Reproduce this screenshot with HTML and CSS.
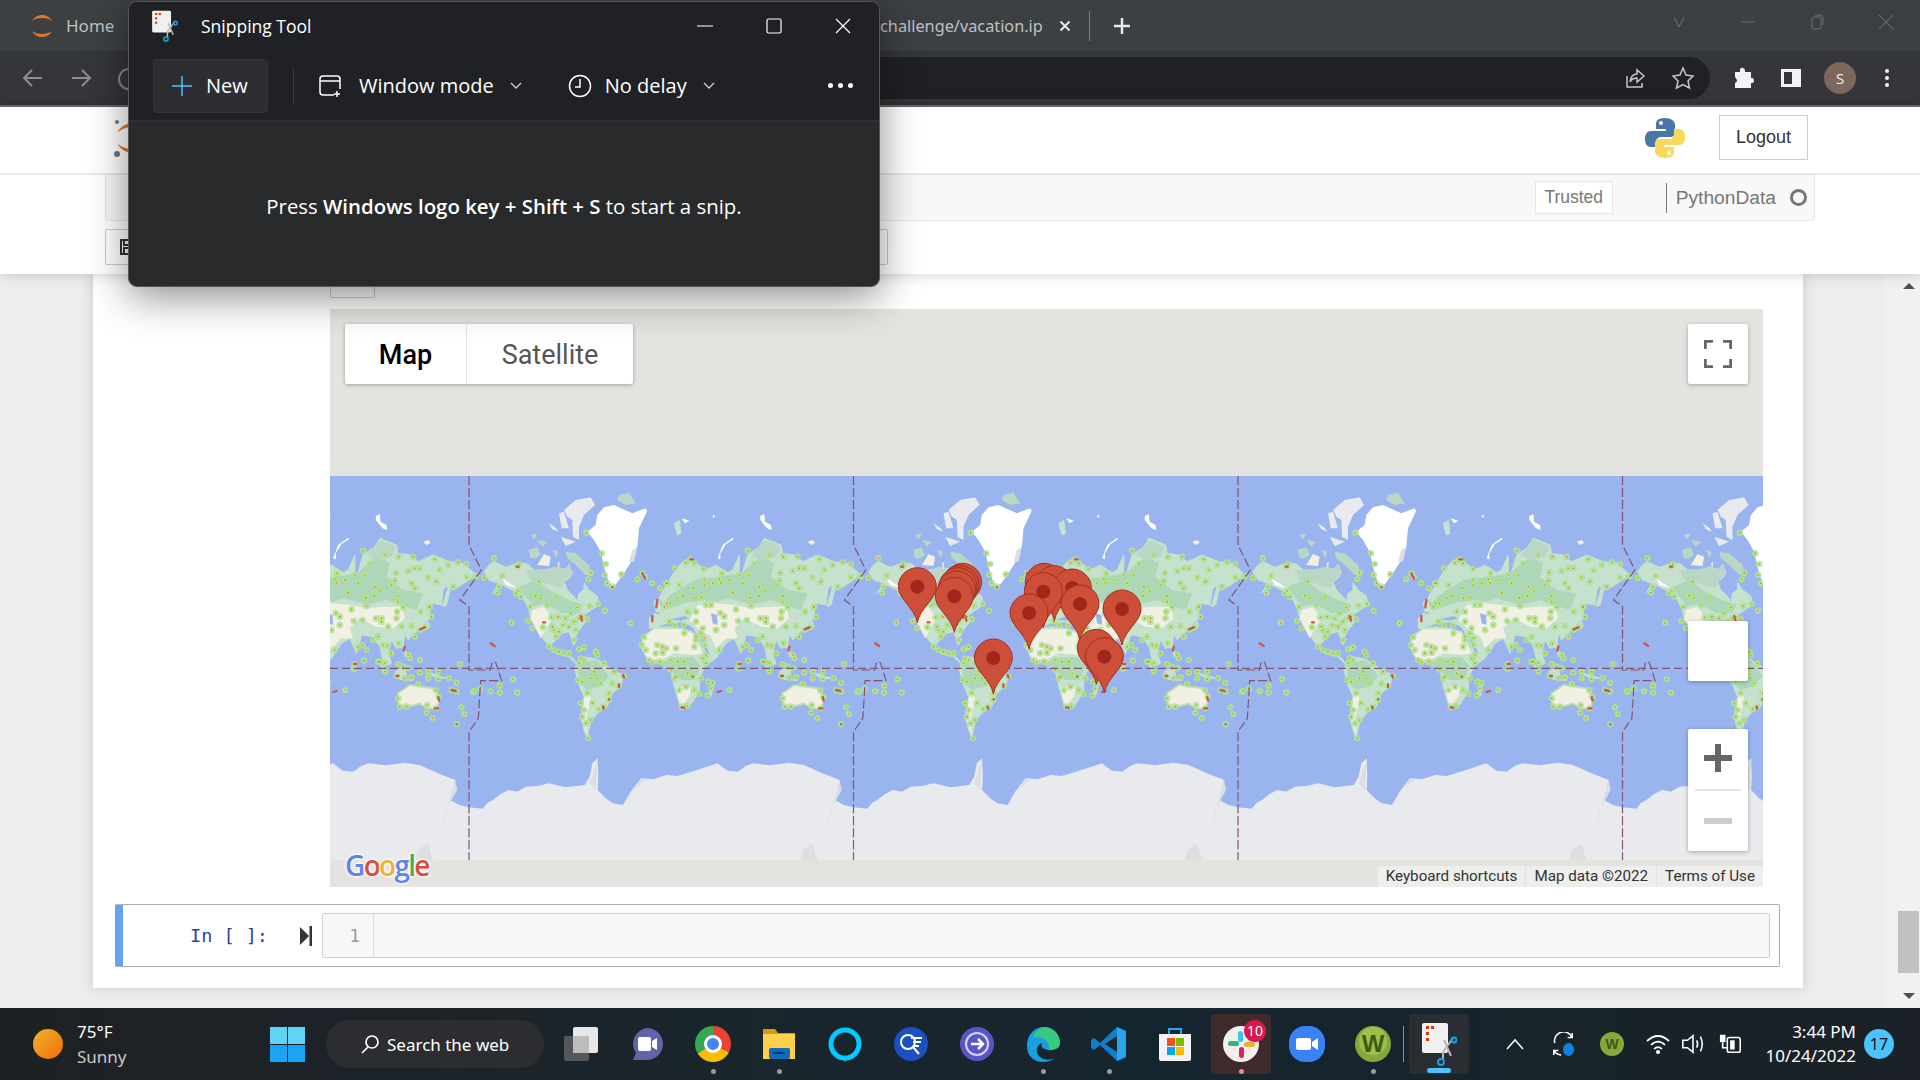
FILE: index.html
```html
<!DOCTYPE html>
<html lang="en">
<head>
  <meta charset="UTF-8">
  <title>challenge/vacation.ipynb</title>
  <link rel="stylesheet" href="styles.css">
</head>
<body>
  <!-- browser -->
  <div class="tabstrip">
    <div class="tab-home">
      <svg class="jup-small" viewBox="0 0 24 30"><path d="M2 10C6 2 18 2 22 10C18 6 6 6 2 10Z"/><path d="M2 20C6 28 18 28 22 20C18 24 6 24 2 20Z"/></svg>
      <span>Home</span>
    </div>
    <div class="tab-active">
      <span class="tab-title">challenge/vacation.ip</span>
      <svg class="tab-x" viewBox="0 0 12 12"><path d="M1.500 1.500L10.500 10.500M10.500 1.500L1.500 10.500"/></svg>
    </div>
    <div class="tab-sep"></div>
    <svg class="tab-plus" viewBox="0 0 18 18"><path d="M9 1V17M1 9H17"/></svg>
    <div class="win-ctrls">
      <svg viewBox="0 0 16 16"><path d="M3 3L8 13L13 3"/></svg>
      <svg viewBox="0 0 16 16"><path d="M1 8H15"/></svg>
      <svg viewBox="0 0 16 16"><rect x="3" y="3" width="9" height="12" rx="2"/><path d="M6 1H11Q14 1 14 4V11"/></svg>
      <svg viewBox="0 0 16 16"><path d="M1 1L15 15M15 1L1 15"/></svg>
    </div>
  </div>
  <div class="addrbar">
    <svg class="nav-ic" viewBox="0 0 24 24"><path d="M21 12H4M11 4L3 12L11 20"/></svg>
    <svg class="nav-ic" viewBox="0 0 24 24"><path d="M3 12H20M13 4L21 12L13 20"/></svg>
    <svg class="nav-ic" viewBox="0 0 24 24"><path d="M20 7A10 10 0 1 0 22 12"/></svg>
    <div class="omnibox">
      <svg class="omni-ic" viewBox="0 0 24 24"><path d="M4 10V21H19V17"/><path d="M7 16Q8 8 14 8V4L21 10L14 16V12Q9 12 7 16Z"/></svg>
      <svg class="omni-ic" viewBox="0 0 24 24"><path d="M12 2L15 9L22 10L17 15L18.500 22L12 18.500L5.500 22L7 15L2 10L9 9Z"/></svg>
    </div>
    <svg class="tool-ic" viewBox="0 0 24 24"><path d="M9 3Q12 0 14 4V6H20V12H22Q24 15 22 17H20V22H4V17Q8 15 4 11V6H9Z"/></svg>
    <svg class="tool-ic" viewBox="0 0 24 24"><path fill-rule="evenodd" d="M2 3H22V21H2ZM5 6V18H13V6Z"/></svg>
    <div class="avatar">S</div>
    <div class="kebab"><i></i><i></i><i></i></div>
  </div>

  <!-- jupyter header -->
  <div class="jp-head">
    <div class="jp-top">
      <svg class="jup-logo" viewBox="0 0 40 42"><path d="M4 16C10 3 30 3 36 16C28 8 12 8 4 16Z"/><path d="M4 26C10 39 30 39 36 26C28 34 12 34 4 26Z"/><circle class="jup-dot" cx="4" cy="5" r="2"/><circle class="jup-dot" cx="4" cy="37" r="3"/></svg>
      <svg class="py-logo" viewBox="0 0 42 42">
        <path class="py-blue" d="M21 1C12 1 12 5 12 8V12H22V14H7C2 14 1 19 1 22C1 27 3 30 7 30H12V25C12 21 15 20 18 20H27C29 20 31 18 31 16V8C31 4 27 1 21 1Z"/>
        <path class="py-yellow" d="M21 41C30 41 30 37 30 34V30H20V28H35C40 28 41 23 41 20C41 15 39 12 35 12H30V17C30 21 27 22 24 22H15C13 22 11 24 11 26V34C11 38 15 41 21 41Z"/>
        <circle class="py-eye" cx="17" cy="6" r="2"/><circle class="py-eye" cx="25" cy="36" r="2"/>
      </svg>
      <div class="logout">Logout</div>
    </div>
    <div class="jp-menu">
      <div class="trusted">Trusted</div>
      <div class="kernel">PythonData</div>
      <div class="kernel-dot"></div>
    </div>
    <div class="jp-btns">
      <svg class="save-ic" viewBox="0 0 16 16"><path d="M1 1H13L15 3V15H1ZM4 1V6H11V1M4 15V9H12V15"/></svg>
    </div>
  </div>

  <!-- notebook -->
  <div class="main">
    <div class="panel">
      <div class="out-stub"></div>
      <div class="map">
        <!-- units are 1/3 px, one world is 1153.5 wide -->
        <svg class="map-svg" viewBox="0 0 4299 1152">
          <defs>
            <path id="heat" d="M75 205h0M100 258h0M45 263h0M22 258h0M145 230h0M150 222h0M210 275h0M90 290h0M85 308h0M140 310h0M155 320h0M148 303h0M200 317h0M215 325h0M262 322h0M183 350h0M325 352h0M362 348h0M388 342h0M407 362h0M177 393h0M190 415h0M247 382h0M268 380h0M290 385h0M305 370h0M330 385h0M340 380h0M315 395h0M300 410h0M320 420h0M270 425h0M262 440h0M255 420h0M282 405h0M355 388h0M128 398h0M222 412h0M235 345h0M250 410h0M240 470h0M255 480h0M270 485h0M285 490h0M300 490h0M315 450h0M330 478h0M345 472h0M380 485h0M385 495h0M335 505h0M345 510h0M405 520h0M330 520h0M327 570h0M340 575h0M365 565h0M375 545h0M385 565h0M395 580h0M435 545h0M465 558h0M430 580h0M450 588h0M420 610h0M420 630h0M405 650h0M390 658h0M355 610h0M370 640h0M345 660h0M340 680h0M350 700h0M358 745h0M365 690h0M335 640h0M365 248h0M358 268h0M407 255h0M415 280h0M430 290h0M457 253h0M410 222h0M398 190h0M352 128h0M132 568h0M92 587h0M92 608h0M65 604h0M33 596h0M15 604h0M145 608h0M505 268h0M520 250h0M528 260h0M550 280h0M573 295h0M595 280h0M485 400h0M525 442h0M518 465h0M530 480h0M540 510h0M550 517h0M572 515h0M565 465h0M580 470h0M560 490h0M664 208h0M651 218h0M676 220h0M704 237h0M618 235h0M591 280h0M631 285h0M673 295h0M706 270h0M706 285h0M731 280h0M751 268h0M756 278h0M781 270h0M758 250h0M811 255h0M841 255h0M836 182h0M901 195h0M943 200h0M986 200h0M1051 208h0M1091 225h0M1121 217h0M1146 222h0M1171 262h0M1146 262h0M1106 290h0M1056 275h0M1031 262h0M1066 240h0M1006 235h0M991 235h0M971 243h0M934 248h0M856 222h0M821 280h0M871 290h0M888 303h0M869 317h0M844 323h0M791 308h0M931 272h0M921 285h0M981 280h0M991 295h0M941 318h0M941 335h0M956 352h0M846 348h0M801 358h0M754 370h0M766 380h0M766 405h0M808 393h0M834 390h0M874 385h0M891 395h0M911 410h0M938 365h0M676 325h0M698 322h0M626 325h0M641 317h0M594 340h0M586 350h0M604 340h0M656 365h0M681 365h0M601 395h0M618 405h0M644 405h0M681 395h0M701 415h0M726 345h0M711 345h0M696 430h0M706 445h0M741 420h0M681 450h0M681 440h0M646 430h0M676 470h0M706 465h0M751 480h0M711 495h0M621 475h0M591 475h0M581 488h0M606 510h0M626 515h0M646 515h0M701 505h0M711 520h0M606 540h0M621 560h0M671 560h0M696 565h0M656 550h0M651 590h0M676 600h0M691 612h0M716 617h0M726 595h0M718 575h0M731 578h0M616 565h0M631 600h0M638 650h0M654 648h0M781 600h0M821 470h0M834 465h0M846 480h0M866 450h0M881 440h0M896 465h0M908 468h0M921 490h0M943 460h0M981 408h0M991 440h0M1006 420h0M1024 412h0M1041 380h0M1034 352h0M1008 365h0M1036 350h0M951 410h0M936 385h0M891 385h0M971 495h0M976 505h0M1006 510h0M886 515h0M901 520h0M901 545h0M881 515h0M809 522h0M808 538h0M838 512h0M936 558h0M941 522h0M956 530h0M971 535h0M961 565h0M981 562h0M1006 548h0M1031 545h0M1061 545h0M1061 568h0M1031 565h0M1094 565h0M1116 578h0M1126 522h0M1166 605h0M1101 600h0M1116 605h0M1001 582h0M1054 600h0M1063 620h0M941 625h0M946 650h0M966 650h0M1028 645h0M1026 668h0M1056 655h0M1044 685h0M1131 652h0M1139 672h0M1116 703h0"/>
            <g id="world" transform="translate(0 42)">
              <g class="tile">
                <path class="ice" d="M0 952L41 956L56 938L72 930L95 912L118 900L145 905L171 890L205 888L240 880L290 892L347 885L362 860L370 820L386 805L388 860L386 900L410 925L431 940L462 945L485 905L516 865L552 868L592 855L625 858L653 850L700 835L745 820L775 842L806 845L830 828L852 820L905 826L960 818L1005 825L1060 850L1112 870L1104 905L1097 930L1125 945L1153 952V1110H0Z"/>
                <path class="ice-dark" d="M1112 870L1118 900L1085 960L1070 1040L1090 950ZM386 805L380 900L362 880ZM516 865L495 900L530 870ZM1000 1080L1030 1060L1045 1110H995Z"/>
                <!-- the Americas -->
                <path class="land" d="M45 245L60 225L75 215L110 232L150 218L175 222L195 240L230 240L260 232L290 238L300 222L310 250L300 265L285 275L295 300L320 325L325 340L330 310L345 300L345 278L360 300L385 318L390 345L370 358L345 375L350 395L330 420L320 440L310 450L300 425L280 430L250 460L245 470L265 490L305 500L312 505L325 525L300 500L260 490L225 450L200 415L185 385L180 360L165 330L130 300L100 285L70 310L90 280L60 270Z"/>
                <path class="land-grey" d="M170 240L230 240L260 232L290 238L300 222L310 250L285 275L280 295L230 280L185 270Z"/>
                <path class="land-dark" d="M150 290L200 270L240 300L300 330L340 345L330 370L280 370L230 340L195 350L170 320Z"/>
                <path class="snow" d="M100 265L130 285L145 295L110 285Z"/>
                <path class="sand" d="M190 360L225 350L250 385L235 410L215 445L200 415L185 385Z"/>
                <path class="land-grey" d="M290 185L320 190L360 225L372 260L350 255L320 225L295 205ZM178 180L205 172L215 195L200 205L185 205ZM205 150L235 155L220 170ZM185 135L205 130L195 148ZM250 180L268 185L262 205Z"/>
                <path class="sand" d="M205 225L225 192L245 200L240 228Z"/>
                <path class="ice" d="M265 220L272 215L270 240ZM275 140L320 155L290 168ZM285 60L320 30L365 22L378 45L345 75L330 110L330 150L312 140L310 90L295 80ZM270 70L285 65L300 115L278 115ZM240 100L262 115L268 125L250 118Z"/>
                <path class="snow" d="M355 125L380 105L385 75L405 52L435 45L490 70L530 55L535 62L510 115L505 170L490 210L465 250L435 290L420 280L405 230L395 185L375 150Z"/>
                <path class="ice-dark" d="M490 180L505 170L495 215L480 215Z"/>
                <path class="land-grey" d="M450 15L480 8L500 40L470 45L445 30Z"/>
                <path class="land" d="M325 515L345 500L385 508L410 525L440 545L465 555L455 590L430 610L415 650L385 670L365 695L355 745L345 720L335 680L345 620L330 585L318 540Z"/>
                <path class="land-dark" d="M325 520L385 510L420 560L390 590L355 600L330 575Z"/>
                <path class="sand" d="M345 625L360 605L365 630L350 690L355 740L340 690Z"/>
                <path class="land" d="M310 460L325 445L315 465ZM330 478L345 472L340 482Z"/>
                <!-- old world -->
                <g transform="translate(576 0)">
                  <path class="land" d="M-55 440L-20 415L20 410L60 415L95 425L110 450L135 500L185 460L165 505L130 530L115 570L115 605L85 650L60 660L50 625L40 590L30 545L-5 520L-40 510L-58 475Z"/>
                  <path class="sand" d="M-55 445L-20 418L60 418L95 430L125 490L100 495L40 490L0 510L-40 505L-58 475Z"/>
                  <path class="land-dark" d="M-5 520L30 505L95 500L120 530L100 570L60 570L35 545Z"/>
                  <path class="sand" d="M45 590L90 590L85 620L60 650L52 625Z"/>
                  <path class="land" d="M-35 385L-20 370L-5 375L5 340L-5 320L20 280L40 245L65 215L85 205L115 225L130 240L145 235L165 225L200 248L215 240L235 195L235 250L240 260L260 195L295 170L310 145L360 165L365 190L400 195L425 215L470 195L520 215L560 220L600 255L570 275L530 300L510 290L520 270L500 300L495 345L470 340L460 360L460 385L430 415L405 440L395 450L385 430L380 470L360 475L345 450L335 490L345 520L325 530L310 470L290 440L255 435L240 490L220 445L195 460L165 505L135 515L115 445L95 410L60 395L20 405L-5 415L-35 415Z"/>
                  <path class="land-dark" d="M20 320L100 270L180 260L240 250L300 200L340 220L330 260L380 300L440 310L420 360L390 350L330 330L270 345L200 325L170 335L130 330L70 340L10 360Z"/>
                  <path class="land-grey" d="M270 195L310 150L358 168L345 200L300 210Z"/>
                  <path class="sand" d="M110 345L160 340L220 345L270 355L320 350L375 350L385 385L350 415L300 410L250 385L220 415L230 445L195 445L165 475L150 440L110 415L85 390Z"/>
                  <path class="sea" d="M150 370L168 375L170 405L155 400ZM30 388L70 378L85 385L60 392ZM118 445L122 442L145 490L138 495ZM-10 412L20 400L60 398L90 408L60 408L20 408Z"/>
                  <path class="land" d="M40 100L55 92L60 130L50 135L45 120ZM515 290L525 285L510 345L498 350ZM425 415L445 405L455 395L460 410L435 425ZM305 510L330 545L320 545ZM355 545L385 530L390 555L365 565ZM355 560L410 572L370 568ZM450 545L510 565L480 565ZM233 520L240 535L232 535ZM155 580L160 575L150 620L140 620ZM-20 335L-5 325L0 365L-15 365ZM380 470L395 500L385 500Z"/>
                  <path class="snow" d="M62 85L85 92L72 100ZM170 205L185 165L215 143L218 148L195 162L178 190L178 208ZM298 78L310 72L312 95L330 105L332 120L318 115L298 90ZM155 75L163 77L157 85Z"/>
                  <path class="sand" d="M440 155L455 150L463 158L450 165Z"/>
                  <path class="australia" d="M365 610L400 585L430 590L470 595L490 625L480 655L450 655L430 640L395 650L370 650L362 625Z"/>
                </g>
                <g class="heat-on">
                  <use class="heat-glow" href="#heat"/>
                  <use class="heat-lime" href="#heat"/>
                  <use class="heat-core" href="#heat"/>
                </g>
                <path class="spots" d="M335 378l4 14M65 460l12 8M550 378v16M565 330l-3 22M520 250l8 16M430 292h1M222 397h6M462 555l3 8M450 583v8M402 650l2 6M420 628h1M143 230h6M664 208h8M961 470l-3 12M756 603l-10 3M671 560h1M638 653h8M1101 600l12 3M1061 622l3 10M1051 655h10M1116 703h1M1021 412l-14 6M936 558h6M809 522h6"/>
              </g>
              <path class="dateline" d="M0 -42V165L37 240L-27 330L0 350V540H64L69 517H80L98 572H35L28 685L0 725V1110"/>
            </g>
            <g id="pin">
              <path class="pin-body" d="M0 0C-8 -45 -57 -70 -57 -108C-57 -140 -30 -165 0 -165C30 -165 57 -140 57 -108C57 -70 8 -45 0 0Z"/>
              <circle class="pin-dot" cy="-108" r="21"/>
            </g>
          </defs>
          <rect class="sea" width="4299" height="1152"/>
          <use href="#world" x="-736.500"/>
          <use href="#world" x="417"/>
          <use href="#world" x="1570.500"/>
          <use href="#world" x="2724"/>
          <use href="#world" x="3877.500"/>
          <path class="equator" d="M0 577H4299"/>
          <use href="#pin" x="1762" y="440"/>
          <use href="#pin" x="1898" y="427"/>
          <use href="#pin" x="1890" y="434"/>
          <use href="#pin" x="1884" y="440"/>
          <use href="#pin" x="1880" y="450"/>
          <use href="#pin" x="1873" y="469"/>
          <use href="#pin" x="1990" y="654"/>
          <use href="#pin" x="2143" y="427"/>
          <use href="#pin" x="2173" y="434"/>
          <use href="#pin" x="2227" y="444"/>
          <use href="#pin" x="2140" y="455"/>
          <use href="#pin" x="2250" y="492"/>
          <use href="#pin" x="2097" y="519"/>
          <use href="#pin" x="2376" y="507"/>
          <use href="#pin" x="2299" y="625"/>
          <use href="#pin" x="2323" y="650"/>
        </svg>
        <div class="map-type">
          <div class="map-type-on">Map</div>
          <div class="map-type-off">Satellite</div>
        </div>
        <div class="map-full">
          <svg viewBox="0 0 28 28"><path d="M1 9V1H9M19 1H27V9M27 19V27H19M9 27H1V19"/></svg>
        </div>
        <div class="map-blank"></div>
        <div class="map-zoom">
          <div class="zoom-in"><i></i><i></i></div>
          <div class="zoom-line"></div>
          <div class="zoom-out"><i></i></div>
        </div>
        <div class="google"><span class="g-b">G</span><span class="g-r">o</span><span class="g-y">o</span><span class="g-b">g</span><span class="g-g">l</span><span class="g-r">e</span></div>
        <div class="attrib">
          <span>Keyboard shortcuts</span>
          <span>Map data ©2022</span>
          <span>Terms of Use</span>
        </div>
      </div>
      <div class="cell">
        <div class="prompt">In [ ]:</div>
        <svg class="run-ic" viewBox="0 0 12 20"><path d="M0 1L9 10L0 19Z"/><rect x="9.500" y="0" width="2.500" height="20"/></svg>
        <div class="code">
          <div class="gutter">1</div>
        </div>
      </div>
    </div>
    <div class="scrollbar">
      <div class="arrow-up"></div>
      <div class="thumb"></div>
      <div class="arrow-down"></div>
    </div>
  </div>

  <!-- taskbar -->
  <div class="taskbar">
    <div class="weather">
      <div class="sun"></div>
      <div class="weather-txt"><div>75°F</div><div class="sunny">Sunny</div></div>
    </div>
    <svg class="start" viewBox="0 0 35 35">
      <rect class="st1" width="17" height="17"/><rect class="st1" x="18" width="17" height="17"/>
      <rect class="st2" y="18" width="17" height="17"/><rect class="st2" x="18" y="18" width="17" height="17"/>
    </svg>
    <div class="search">
      <svg viewBox="0 0 20 20"><circle cx="12" cy="8" r="6"/><path d="M8 13L2 19"/></svg>
      <span>Search the web</span>
    </div>
    <div class="apps">
      <div class="app"><svg viewBox="0 0 36 36"><rect x="10" y="1" width="25" height="26" rx="2" fill="#e8e8e8"/><rect x="1" y="10" width="25" height="25" rx="2" fill="#5c5c5c" opacity=".9"/><rect x="10" y="10" width="16" height="17" fill="#bdbdbd"/></svg></div>
      <div class="app"><svg viewBox="0 0 36 36"><path d="M18 2A16 16 0 0 1 18 34H4L7 27A16 16 0 0 1 18 2Z" fill="#6264a7"/><rect x="9" y="11" width="13" height="14" rx="2" fill="#fff"/><path d="M23 15L28 12V24L23 21Z" fill="#fff"/></svg></div>
      <div class="app running"><div class="chrome-ic"><div></div></div></div>
      <div class="app running"><svg viewBox="0 0 36 36"><path d="M2 3H14L17 7H34V33H2Z" fill="#d69b14"/><rect x="2" y="8" width="32" height="25" fill="#fcd14e"/><rect x="8" y="22" width="21" height="11" rx="2" fill="#0f6cbd"/><rect x="12" y="26" width="12" height="2" fill="#083c6e"/></svg></div>
      <div class="app"><svg viewBox="0 0 36 36"><circle cx="18" cy="18" r="14" fill="none" stroke="#00caff" stroke-width="5"/><path d="M14 30L18 36L23 30Z" fill="#00caff"/></svg></div>
      <div class="app"><svg viewBox="0 0 36 36"><circle cx="18" cy="18" r="17" fill="#1c4fc4"/><circle cx="15" cy="16" r="7" fill="none" stroke="#fff" stroke-width="2"/><path d="M20 21L26 28M18 12H29M20 16H28M20 20H26" stroke="#fff" stroke-width="2"/></svg></div>
      <div class="app"><svg viewBox="0 0 36 36"><circle cx="18" cy="18" r="17" fill="#5b54c9"/><circle cx="18" cy="18" r="11" fill="none" stroke="#d9d6f7" stroke-width="2"/><path d="M12 18H24M19 13L24 18L19 23" fill="none" stroke="#fff" stroke-width="2.500"/></svg></div>
      <div class="app running"><svg viewBox="0 0 36 36"><path d="M2 20C2 8 10 1 19 1C29 1 35 9 35 17C35 22 30 24 25 24C20 24 15 22 17 17C11 19 10 27 15 31C20 35 26 34 30 32C26 35 21 36 18 36C9 36 2 30 2 20Z" fill="#1b9de2"/><path d="M19 1C29 1 35 9 35 17C35 22 30 24 25 24C24 14 17 9 8 12C10 5 15 1 19 1Z" fill="#37c881"/></svg></div>
      <div class="app running"><svg viewBox="0 0 36 36"><path d="M26 1L35 5V31L26 35L9 19L3 24L0 22V14L3 12L9 17Z" fill="#0f7fd0"/><path d="M26 10L14 18L26 26Z" fill="#1f2328"/><path d="M26 1L35 5V31L26 35Z" fill="#2aa3ee"/></svg></div>
      <div class="app"><svg viewBox="0 0 36 36"><path d="M12 9V3H24V9" fill="none" stroke="#28a8ea" stroke-width="2"/><path d="M2 8H34V33Q34 35 32 35H4Q2 35 2 33Z" fill="#f3f3f3"/><rect x="10" y="12" width="8" height="8" fill="#f25022"/><rect x="19" y="12" width="8" height="8" fill="#7fba00"/><rect x="10" y="21" width="8" height="8" fill="#00a4ef"/><rect x="19" y="21" width="8" height="8" fill="#ffb900"/></svg></div>
      <div class="app active-slack running-pink">
        <svg viewBox="0 0 36 36"><circle cx="18" cy="18" r="18" fill="#f2f0ec"/><rect x="15" y="5" width="5" height="11" rx="2.500" fill="#36c5f0"/><rect x="5" y="15" width="11" height="5" rx="2.500" fill="#2eb67d"/><rect x="16" y="21" width="5" height="11" rx="2.500" fill="#e01e5a"/><rect x="21" y="16" width="11" height="5" rx="2.500" fill="#ecb22e"/></svg>
        <div class="slack-badge">10</div>
      </div>
      <div class="app"><svg viewBox="0 0 36 36"><rect width="36" height="36" rx="16" fill="#3b82f6"/><rect x="7" y="12" width="15" height="12" rx="2" fill="#fff"/><path d="M23 16L29 12V24L23 20Z" fill="#fff"/></svg></div>
      <div class="app running"><svg viewBox="0 0 36 36"><circle cx="18" cy="18" r="18" fill="#84a93a"/><circle cx="18" cy="15" r="14" fill="#9cc04b"/><text class="w-letter" x="18" y="26">W</text></svg></div>
      <div class="app active-snip"><svg viewBox="0 0 36 44"><rect x="1" y="1" width="26" height="30" rx="2" fill="#f0f0f0"/><rect x="5" y="4" width="3" height="3" fill="#d83b01"/><rect x="10" y="4" width="3" height="3" fill="#d83b01"/><rect x="5" y="10" width="3" height="3" fill="#d83b01"/><rect x="5" y="16" width="3" height="3" fill="#d83b01"/><path d="M32 16L22 30V38M23 18L30 34" fill="none" stroke="#b8b8b8" stroke-width="2"/><circle cx="33" cy="18" r="2.500" fill="none" stroke="#1a9fe0" stroke-width="2"/><circle cx="20" cy="40" r="3" fill="none" stroke="#1a9fe0" stroke-width="2"/></svg></div>
    </div>
    <div class="tray">
      <svg class="tray-chev" viewBox="0 0 18 12"><path d="M1 11L9 2L17 11"/></svg>
      <svg class="tray-ic tray-sync" viewBox="0 0 24 26"><path d="M22 6A10 10 0 0 0 3 12M2 20A10 10 0 0 0 10 25M22 1V6H17M2 25V20H7"/><ellipse class="tray-blue" cx="18" cy="19" rx="6" ry="7"/></svg>
      <svg class="tray-ic tray-w" viewBox="0 0 24 24"><circle cx="12" cy="12" r="12" fill="#86a83a"/><text class="w-letter w-small" x="12" y="17">W</text></svg>
      <svg class="tray-ic tray-wifi" viewBox="0 0 24 22"><path d="M1 8Q12 -2 23 8M5 12Q12 5 19 12M8 16Q12 12 16 16"/><circle class="tray-fill" cx="12" cy="19" r="2"/></svg>
      <svg class="tray-ic tray-vol" viewBox="0 0 26 26"><path d="M2 9H7L13 4V22L7 17H2ZM17 9Q19 13 17 17M21 5Q25 13 21 21"/></svg>
      <svg class="tray-ic tray-bat" viewBox="0 0 26 26"><path class="tray-fill" d="M1 3H7V11H1Z"/><path d="M4 11V17H9"/><rect x="9" y="6" width="14" height="16" rx="2"/><rect class="tray-fill" x="12" y="9" width="5" height="10"/></svg>
    </div>
    <div class="clock"><div>3:44 PM</div><div>10/24/2022</div></div>
    <div class="notif">17</div>
  </div>

  <!-- snipping tool window -->
  <div class="snip">
    <div class="snip-title">
      <svg class="snip-app" viewBox="0 0 36 44"><rect x="1" y="1" width="26" height="30" rx="2" fill="#f0f0f0"/><rect x="5" y="4" width="3" height="3" fill="#d83b01"/><rect x="10" y="4" width="3" height="3" fill="#d83b01"/><rect x="5" y="10" width="3" height="3" fill="#d83b01"/><rect x="5" y="16" width="3" height="3" fill="#d83b01"/><path d="M32 16L22 30V38M23 18L30 34" fill="none" stroke="#b8b8b8" stroke-width="2"/><circle cx="33" cy="18" r="2.500" fill="none" stroke="#1a9fe0" stroke-width="2"/><circle cx="20" cy="40" r="3" fill="none" stroke="#1a9fe0" stroke-width="2"/></svg>
      <span>Snipping Tool</span>
      <div class="snip-ctrls">
        <svg viewBox="0 0 16 16"><path d="M0 8H16"/></svg>
        <svg viewBox="0 0 16 16"><rect x="1" y="1" width="14" height="14" rx="1.500"/></svg>
        <svg viewBox="0 0 16 16"><path d="M1 1L15 15M15 1L1 15"/></svg>
      </div>
    </div>
    <div class="snip-bar">
      <div class="snip-new">
        <svg viewBox="0 0 20 20"><path d="M10 0V20M0 10H20"/></svg>
        <span>New</span>
      </div>
      <div class="snip-sep"></div>
      <svg class="snip-ic" viewBox="0 0 24 24"><path d="M16 21H5Q2 21 2 18V5Q2 2 5 2H19Q22 2 22 5V15M2 7H22M19 17V23M16 20H22"/></svg>
      <span class="snip-label">Window mode</span>
      <svg class="snip-chev" viewBox="0 0 12 8"><path d="M1 1L6 6L11 1"/></svg>
      <svg class="snip-ic snip-clock" viewBox="0 0 24 24"><circle cx="12" cy="12" r="10.500"/><path d="M12 5V13H7"/></svg>
      <span class="snip-label snip-label-short">No delay</span>
      <svg class="snip-chev" viewBox="0 0 12 8"><path d="M1 1L6 6L11 1"/></svg>
      <div class="snip-more"><i></i><i></i><i></i></div>
    </div>
    <div class="snip-body"><span>Press <b>Windows logo key + Shift + S</b> to start a snip.</span></div>
  </div>
</body>
</html>
```

FILE: styles.css
```css
/* page */
html, body {
  margin: 0;
  height: 1080px;
  overflow: hidden;
}
body {
  display: flex;
  flex-direction: column;
  font-family: "Open Sans", "Liberation Sans", sans-serif;
  background: #eee;
  position: relative;
}

/* browser tabs */
.tabstrip {
  height: 51px;
  background: #3d4043;
  display: flex;
  align-items: center;
  color: #bdc1c6;
  flex-shrink: 0;
}
.tab-home {
  display: flex;
  align-items: center;
  width: 880px;
  padding-left: 30px;
  box-sizing: border-box;
  font-size: 17px;
  font-family: "Noto Sans", sans-serif;
  gap: 12px;
}
.jup-small {
  width: 24px;
  height: 30px;
  fill: #e0762c;
}
.tab-active {
  width: 195px;
  display: flex;
  align-items: center;
}
.tab-title {
  width: 165px;
  white-space: nowrap;
  font-size: 16.3px;
  font-family: "Noto Sans", sans-serif;
}
.tab-x {
  width: 12px;
  height: 12px;
  margin-left: 14px;
  stroke: #e8eaed;
  stroke-width: 2;
}
.tab-sep {
  width: 1px;
  height: 30px;
  margin-left: 14px;
  background: #7b7e82;
}
.tab-plus {
  width: 18px;
  height: 18px;
  margin-left: 23px;
  stroke: #e8eaed;
  stroke-width: 2.5;
}
.win-ctrls {
  margin-left: auto;
  display: flex;
  gap: 53px;
  padding-right: 26px;
}
.win-ctrls svg {
  width: 16px;
  height: 16px;
  margin-top: -8px;
  fill: none;
  stroke: #6d7175;
  stroke-width: 1;
}

/* address bar */
.addrbar {
  height: 54px;
  border-bottom: 2px solid #6a6c6f;
  background: #35363a;
  display: flex;
  align-items: center;
  flex-shrink: 0;
}
.nav-ic {
  width: 24px;
  height: 24px;
  margin-left: 21px;
  margin-right: 3px;
  fill: none;
  stroke: #8a8d91;
  stroke-width: 2;
  flex-shrink: 0;
}
.omnibox {
  width: 1464px;
  height: 42px;
  margin-left: 102px;
  margin-right: 21px;
  padding-right: 15px;
  box-sizing: border-box;
  border-radius: 0 21px 21px 0;
  background: #202124;
  display: flex;
  justify-content: flex-end;
  align-items: center;
  gap: 24px;
  flex-shrink: 0;
}
.omni-ic {
  width: 24px;
  height: 24px;
  fill: none;
  stroke: #c4c7c5;
  stroke-width: 1.5;
}
.tool-ic {
  width: 24px;
  height: 24px;
  margin-right: 24px;
  fill: #f1f3f4;
}
.tool-ic + .avatar {
  margin-left: -3px;
}
.avatar {
  width: 32px;
  height: 32px;
  border-radius: 50%;
  background: #7d665b;
  color: #f1f3f4;
  font-size: 15px;
  display: flex;
  align-items: center;
  justify-content: center;
}
.kebab {
  margin-left: 29px;
  display: flex;
  flex-direction: column;
  gap: 3px;
}
.kebab i {
  width: 4px;
  height: 4px;
  border-radius: 50%;
  background: #f1f3f4;
}

/* jupyter header */
.jp-head {
  height: 167px;
  background: #fff;
  box-shadow: 0 0 14px rgba(0, 0, 0, 0.2);
  position: relative;
  z-index: 2;
  flex-shrink: 0;
}
.jp-top {
  height: 68px;
  box-sizing: border-box;
  border-bottom: 2px solid #e7e7e7;
  display: flex;
  align-items: center;
  padding: 0 0 5px 113px;
}
.jup-logo {
  width: 40px;
  height: 42px;
  fill: #e0762c;
}
.jup-dot {
  fill: #767677;
}
.py-logo {
  width: 42px;
  height: 42px;
  margin-left: auto;
}
.py-blue {
  fill: #4a76a8;
}
.py-yellow {
  fill: #f7d95e;
}
.py-eye {
  fill: #fff;
}
.logout {
  width: 89px;
  height: 45px;
  margin-left: 33px;
  margin-right: 112px;
  box-sizing: border-box;
  border: 1px solid #ccc;
  color: #333;
  font: 18px "Liberation Sans", sans-serif;
  display: flex;
  align-items: center;
  justify-content: center;
}
.jp-menu {
  width: 1710px;
  height: 46px;
  margin-left: 105px;
  box-sizing: border-box;
  background: #f8f8f8;
  border: 1px solid #e7e7e7;
  border-top: 0;
  border-radius: 0 0 3px 3px;
  display: flex;
  align-items: center;
  justify-content: flex-end;
  font-family: "Liberation Sans", sans-serif;
  color: #777;
}
.trusted {
  width: 78px;
  height: 33px;
  box-sizing: border-box;
  border: 1px solid #e7e7e7;
  background: #fff;
  font-size: 17.5px;
  display: flex;
  align-items: center;
  justify-content: center;
}
.kernel {
  margin-left: 53px;
  height: 30px;
  padding-left: 9px;
  border-left: 1px solid #777;
  font-size: 19.2px;
  line-height: 30px;
}
.kernel-dot {
  width: 11px;
  height: 11px;
  margin-left: 14px;
  margin-right: 7px;
  border: 3px solid #777;
  border-radius: 50%;
}
.jp-btns {
  width: 783px;
  height: 36px;
  margin: 8px 0 0 105px;
  box-sizing: border-box;
  border: 1px solid #ccc;
  border-radius: 2px;
  padding: 9px 14px;
}
.save-ic {
  display: block;
  width: 16px;
  height: 16px;
  fill: none;
  stroke: #333;
  stroke-width: 2;
}

/* notebook */
.main {
  height: 734px;
  display: flex;
  flex-shrink: 0;
}
.panel {
  width: 1710px;
  height: 714px;
  margin-left: 93px;
  background: #fff;
  box-shadow: 0 0 12px 1px rgba(87, 87, 87, 0.2);
}
.out-stub {
  width: 45px;
  height: 24px;
  margin-left: 237px;
  margin-bottom: 11px;
  box-sizing: border-box;
  border: 1px solid #ccc;
  border-top: 0;
  border-radius: 0 0 2px 2px;
}
.map {
  width: 1433px;
  height: 578px;
  margin-left: 237px;
  padding-top: 167px;
  box-sizing: border-box;
  background: #e5e3df;
  position: relative;
  overflow: hidden;
}
.map-svg {
  display: block;
  width: 1433px;
  height: 384px;
}
.tile {
  filter: blur(1.5px);
}
.sea {
  fill: #9ab4ef;
}
.land {
  fill: #c6e2cc;
  stroke: #c6e2cc;
  stroke-width: 3;
  stroke-linejoin: round;
}
.land-dark {
  fill: #aed6b8;
}
.land-grey {
  fill: #bcd6c6;
}
.sand {
  fill: #f2efe3;
}
.australia {
  fill: #f2efe3;
  stroke: #c3e3a3;
  stroke-width: 5;
  stroke-linejoin: round;
}
.ice {
  fill: #e8eaed;
}
.ice-dark {
  fill: #dcdee2;
}
.snow {
  fill: #fff;
}
.heat-on {
  fill: none;
  stroke-linecap: round;
}
.heat-glow {
  stroke: #a6e0a0;
  stroke-width: 20;
  opacity: 0.8;
}
.heat-lime {
  stroke: #bcee6e;
  stroke-width: 11;
}
.heat-core {
  stroke: #d9763f;
  stroke-width: 5;
}
.spots {
  fill: none;
  stroke: #c9584b;
  stroke-width: 7;
  stroke-linecap: round;
}
.dateline, .equator {
  fill: none;
  stroke: #85556a;
  stroke-width: 3.6;
}
.dateline {
  stroke-dasharray: 27 9;
}
.equator {
  stroke-dasharray: 24 12;
}
.pin-body {
  fill: #cd4f39;
  stroke: #a3301f;
  stroke-width: 3;
}
.pin-dot {
  fill: #a0281b;
}

/* map controls */
.map-type {
  position: absolute;
  left: 15px;
  top: 15px;
  height: 60px;
  display: flex;
  background: #fff;
  border-radius: 2px;
  box-shadow: 0 1px 4px rgba(0, 0, 0, 0.3);
  font: 27px Roboto, sans-serif;
}
.map-type div {
  padding-top: 2px;
  display: flex;
  align-items: center;
  justify-content: center;
}
.map-type-on {
  width: 121px;
  color: #000;
  font-weight: 500;
  border-right: 1px solid #e6e6e6;
}
.map-type-off {
  width: 166px;
  color: #565656;
}
.map-full, .map-blank, .map-zoom {
  position: absolute;
  left: 1358px;
  width: 60px;
  background: #fff;
  border-radius: 2px;
  box-shadow: 0 1px 4px rgba(0, 0, 0, 0.3);
}
.map-full {
  top: 15px;
  height: 60px;
  display: flex;
  align-items: center;
  justify-content: center;
}
.map-full svg {
  width: 28px;
  height: 28px;
  fill: none;
  stroke: #666;
  stroke-width: 3.5;
}
.map-blank {
  top: 312px;
  height: 60px;
}
.map-zoom {
  top: 420px;
  height: 122px;
}
.zoom-in {
  height: 60px;
  position: relative;
}
.zoom-in i, .zoom-out i {
  position: absolute;
  background: #666;
}
.zoom-in i:first-child {
  left: 16px;
  top: 26px;
  width: 28px;
  height: 6px;
}
.zoom-in i:last-child {
  left: 27px;
  top: 15px;
  width: 6px;
  height: 28px;
}
.zoom-line {
  height: 2px;
  margin: 0 7px;
  background: #e6e6e6;
}
.zoom-out {
  height: 60px;
  position: relative;
}
.zoom-out i {
  left: 16px;
  top: 27px;
  width: 28px;
  height: 6px;
  background: #ccc;
}
.google {
  position: absolute;
  left: 15px;
  bottom: 3px;
  font: 600 28px "Open Sans", sans-serif;
  letter-spacing: -1.7px;
  text-shadow: 0 0 3px #fff, 0 0 3px #fff, 0 0 3px #fff;
}
.g-b {
  color: #5c85e8;
}
.g-r {
  color: #d2503f;
}
.g-y {
  color: #e8b43a;
}
.g-g {
  color: #4ea858;
}
.attrib {
  position: absolute;
  right: 0;
  bottom: 0;
  height: 21px;
  display: flex;
  background: #eeeeec;
  font: 15.2px Roboto, sans-serif;
  color: #333;
}
.attrib span {
  padding: 0 8px;
  line-height: 21px;
  border-left: 1px solid #e2e2e0;
}
.attrib span:first-child {
  border-left: 0;
}

/* empty cell */
.cell {
  width: 1665px;
  height: 63px;
  margin: 17px 0 0 22px;
  box-sizing: border-box;
  border: 1px solid #ababab;
  border-left: 8px solid #66a3ee;
  border-radius: 2px;
  display: flex;
  align-items: center;
}
.prompt {
  width: 145px;
  text-align: right;
  font: 18.5px "DejaVu Sans Mono", monospace;
  color: #303f9f;
}
.run-ic {
  width: 12px;
  height: 20px;
  margin-left: 32px;
  fill: #333;
}
.code {
  width: 1448px;
  height: 45px;
  margin-left: 10px;
  box-sizing: border-box;
  border: 1px solid #cfcfcf;
  border-radius: 2px;
  background: #f7f7f7;
}
.gutter {
  width: 51px;
  height: 43px;
  box-sizing: border-box;
  border-right: 1px solid #ddd;
  padding-right: 13px;
  text-align: right;
  font: 18px/43px "DejaVu Sans Mono", monospace;
  color: #999;
}

/* scrollbar */
.scrollbar {
  width: 35px;
  margin-left: auto;
  background: #f1f1f1;
  position: relative;
}
.thumb {
  position: absolute;
  right: 1px;
  top: 637px;
  width: 21px;
  height: 62px;
  background: #c1c1c1;
}
.arrow-up, .arrow-down {
  position: absolute;
  right: 5px;
  width: 0;
  border-left: 6px solid transparent;
  border-right: 6px solid transparent;
}
.arrow-up {
  top: 9px;
  border-bottom: 6px solid #505050;
}
.arrow-down {
  bottom: 9px;
  border-top: 6px solid #505050;
}

/* taskbar */
.taskbar {
  height: 72px;
  flex-shrink: 0;
  display: flex;
  align-items: center;
  color: #fff;
  background: linear-gradient(90deg, #1e2124 0%, #1a252c 40%, #15252f 60%, #1b2126 100%);
  font-family: "Noto Sans", sans-serif;
}
.weather {
  width: 270px;
  box-sizing: border-box;
  padding-left: 33px;
  display: flex;
  align-items: center;
  gap: 14px;
}
.sun {
  width: 30px;
  height: 30px;
  border-radius: 50%;
  background: linear-gradient(135deg, #f0b32b, #f06d0c);
}
.weather-txt {
  font-size: 17px;
  line-height: 25px;
}
.sunny {
  color: #c8c8c8;
}
.start {
  width: 35px;
  height: 35px;
  flex-shrink: 0;
}
.st1 {
  fill: #5fd3f8;
}
.st2 {
  fill: #1ba4f5;
}
.search {
  width: 218px;
  height: 48px;
  margin-left: 21px;
  box-sizing: border-box;
  padding-left: 34px;
  border-radius: 24px;
  background: #2b2d30;
  display: flex;
  align-items: center;
  gap: 7px;
  font-size: 17px;
}
.search svg {
  width: 20px;
  height: 20px;
  fill: none;
  stroke: #fff;
  stroke-width: 1.7;
}
.apps {
  display: flex;
  margin-left: 4px;
}
.app {
  width: 66px;
  height: 60px;
  display: flex;
  align-items: center;
  justify-content: center;
  position: relative;
}
.app svg {
  width: 36px;
  height: 36px;
}
.running::after, .running-pink::after {
  content: "";
  position: absolute;
  left: 31px;
  bottom: 0;
  width: 5px;
  height: 5px;
  border-radius: 50%;
  background: #9a9a9a;
}
.running-pink::after {
  background: #f08a96;
}
.chrome-ic {
  width: 36px;
  height: 36px;
  border-radius: 50%;
  background: conic-gradient(#ea4335 0 33%, #fbbc05 33% 66%, #34a853 66% 100%);
  display: flex;
  align-items: center;
  justify-content: center;
}
.chrome-ic div {
  width: 12px;
  height: 12px;
  border-radius: 50%;
  background: #4285f4;
  border: 3px solid #fff;
}
.active-slack {
  background: #3f2a2c;
  border-radius: 4px;
  width: 60px;
  margin: 0 3px;
}
.active-slack::after {
  left: 28px;
}
.slack-badge {
  position: absolute;
  left: 33px;
  top: 6px;
  width: 22px;
  height: 22px;
  border-radius: 50%;
  background: #d9184f;
  font-size: 14px;
  line-height: 22px;
  text-align: center;
}
.active-snip {
  width: 60px;
  margin-left: 3px;
  background: #2a2e33;
  border-radius: 4px;
  position: relative;
}
.active-snip svg {
  height: 44px;
}
.active-snip::before {
  content: "";
  position: absolute;
  left: -6px;
  top: 12px;
  width: 1px;
  height: 36px;
  background: #8a8d90;
}
.active-snip::after {
  content: "";
  position: absolute;
  left: 18px;
  bottom: 1px;
  width: 24px;
  height: 5px;
  border-radius: 3px;
  background: #4cc2ff;
}
.w-letter {
  font: bold 24px "Liberation Sans", sans-serif;
  fill: #3e5a14;
  text-anchor: middle;
}
.w-small {
  font-size: 14px;
}
.tray {
  display: flex;
  align-items: center;
  margin-left: 37px;
}
.tray svg {
  flex-shrink: 0;
}
.tray-chev {
  width: 18px;
  height: 12px;
  fill: none;
  stroke: #fff;
  stroke-width: 1.5;
}
.tray-ic {
  width: 24px;
  height: 24px;
  fill: none;
  stroke: #fff;
  stroke-width: 1.7;
}
.tray-sync {
  margin-left: 27px;
}
.tray-w {
  margin-left: 25px;
  stroke: none;
}
.tray-w text {
  fill: #3e5a14;
}
.tray-wifi {
  margin-left: 22px;
}
.tray-vol {
  margin-left: 11px;
}
.tray-bat {
  margin-left: 14px;
}
.tray-blue {
  fill: #0f7fe0;
  stroke: none;
}
.tray-fill {
  fill: #fff;
  stroke: none;
}
.clock {
  margin-left: auto;
  text-align: right;
  font-size: 17px;
  line-height: 24px;
}
.notif {
  width: 30px;
  height: 30px;
  margin: 0 26px 0 8px;
  border-radius: 50%;
  background: #4cc2ff;
  color: #111;
  font-size: 16px;
  line-height: 30px;
  text-align: center;
}

/* snipping tool window */
.snip {
  position: absolute;
  left: 128px;
  top: 1px;
  width: 752px;
  height: 286px;
  box-sizing: border-box;
  border: 1px solid #55575a;
  border-radius: 9px;
  background: #292a2c;
  color: #fff;
  font-family: "Open Sans", sans-serif;
  box-shadow: 0 10px 40px rgba(0, 0, 0, 0.45);
  overflow: hidden;
  z-index: 5;
}
.snip-title {
  height: 47px;
  background: #202124;
  display: flex;
  align-items: center;
  padding-left: 22px;
  font-size: 17.500px;
}
.snip-app {
  width: 27px;
  height: 32px;
  margin-right: 23px;
}
.snip-ctrls {
  margin-left: auto;
  display: flex;
  gap: 53px;
  padding-right: 28px;
}
.snip-ctrls svg {
  width: 16px;
  height: 16px;
  fill: none;
  stroke: #fff;
  stroke-width: 1.2;
}
.snip-bar {
  height: 73px;
  box-sizing: border-box;
  padding: 2px 0 0 24px;
  background: #202124;
  border-bottom: 2px solid #303134;
  display: flex;
  align-items: center;
  font-size: 20px;
}
.snip-new {
  width: 115px;
  height: 54px;
  box-sizing: border-box;
  padding-left: 18px;
  background: #2d2e31;
  border: 1px solid #333437;
  border-radius: 4px;
  display: flex;
  align-items: center;
  gap: 14px;
}
.snip-new svg {
  width: 20px;
  height: 20px;
  stroke: #4cc2ff;
  stroke-width: 1.5;
}
.snip-sep {
  width: 1px;
  height: 36px;
  margin-left: 25px;
  background: #3a3b3e;
}
.snip-ic {
  width: 24px;
  height: 24px;
  margin-left: 24px;
  fill: none;
  stroke: #fff;
  stroke-width: 1.5;
}
.snip-clock {
  margin-left: 46px;
}
.snip-label {
  margin-left: 17px;
}
.snip-label-short {
  margin-left: 13px;
}
.snip-chev {
  width: 12px;
  height: 8px;
  margin-left: 16px;
  fill: none;
  stroke: #d0d0d0;
  stroke-width: 1.3;
}
.snip-more {
  margin-left: auto;
  margin-right: 26px;
  display: flex;
  gap: 5px;
}
.snip-more i {
  width: 5px;
  height: 5px;
  border-radius: 50%;
  background: #fff;
}
.snip-body {
  height: 164px;
  box-sizing: border-box;
  padding-top: 4px;
  display: flex;
  align-items: center;
  justify-content: center;
  font-size: 20.4px;
}
.snip-body b {
  font-weight: 600;
}
```
